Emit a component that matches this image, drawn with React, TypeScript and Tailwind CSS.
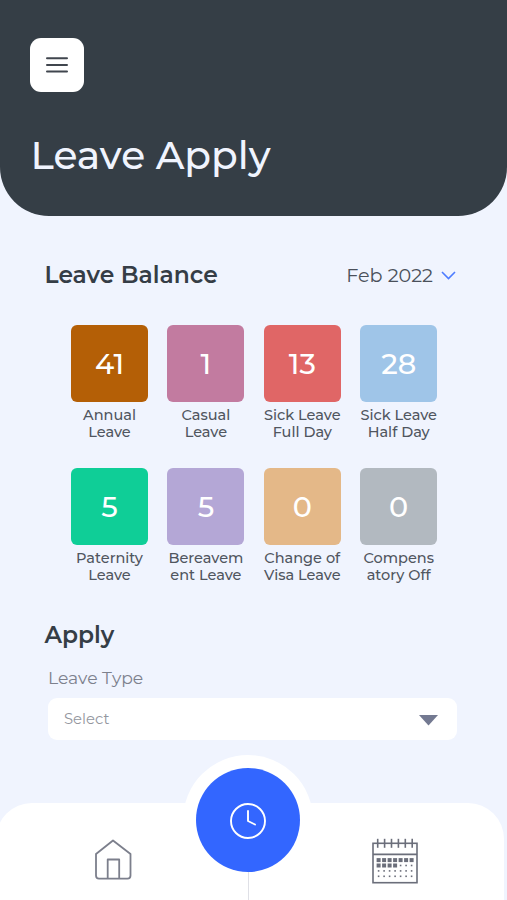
import { useState } from 'react';

const leaveBalances = [
  { count: 41, label: ['Annual', 'Leave'], color: 'bg-[#b45f06]' },
  { count: 1, label: ['Casual', 'Leave'], color: 'bg-[#c27ba0]' },
  { count: 13, label: ['Sick Leave', 'Full Day'], color: 'bg-[#e06666]' },
  { count: 28, label: ['Sick Leave', 'Half Day'], color: 'bg-[#9fc5e8]' },
  { count: 5, label: ['Paternity', 'Leave'], color: 'bg-[#0fce97]' },
  { count: 5, label: ['Bereavem', 'ent Leave'], color: 'bg-[#b4a7d6]' },
  { count: 0, label: ['Change of', 'Visa Leave'], color: 'bg-[#e4b888]' },
  { count: 0, label: ['Compens', 'atory Off'], color: 'bg-[#b2b9c0]' },
];

function HomeIcon() {
  return (
    <svg width="40" height="44" viewBox="0 0 40 44" fill="none" stroke="#7c7f8c" strokeWidth="1.8" strokeLinejoin="round">
      <path d="M3 15 L20 1.500 L37.500 15 V36.500 Q37.500 39.700 34.500 39.700 H6 Q3 39.700 3 36.500 Z" />
      <path d="M14.700 39.700 V20.500 H26.200 V39.700" />
    </svg>
  );
}

function CalendarIcon() {
  const cols = [0, 1, 2, 3, 4, 5, 6];
  const rows = [0, 1, 2, 3];
  const rings = [0, 1, 2, 3, 4, 5];

  return (
    <svg width="48" height="48" viewBox="0 0 48 48" fill="none" stroke="#6b6e7a" strokeWidth="1.6">
      <rect x="2" y="5.300" width="44" height="39.400" />
      <path d="M2 16.400 H46" />
      {rings.map((i) => (
        <path key={i} d={`M${6.7 + i * 6.9} 0.800 V9.800`} />
      ))}
      {rows.map((row) =>
        cols.map((col) => {
          const filled = row === 0 || (row === 1 && col < 4);
          const size = filled ? 4 : 1.6;
          return (
            <rect
              key={`${row}-${col}`}
              x={7.6 + col * 5.5 - size / 2}
              y={22.1 + row * 5.4 - size / 2}
              width={size}
              height={size}
              fill="#6b6e7a"
              stroke="none"
            />
          );
        })
      )}
    </svg>
  );
}

export default function App() {
  const [month] = useState('Feb 2022');
  const [leaveType] = useState('Select');

  return (
    <div className="flex h-[900px] w-[507px] flex-col overflow-hidden bg-[#f0f4fe] font-['Montserrat','Inter',sans-serif] text-[#353d46]">
      {/* Header */}
      <header className="h-[216px] shrink-0 rounded-b-[49px] bg-[#353e46] pl-[30.4px] pt-[38px]">
        <button className="flex size-[54px] items-center justify-center rounded-[11px] bg-white">
          <svg width="22" height="16" viewBox="0 0 22 16" stroke="#40464e" strokeWidth="2" strokeLinecap="round">
            <path d="M1 1.300 H21 M1 8 H21 M1 14.500 H21" />
          </svg>
        </button>
        <h1 className="mt-[39px] text-[39.2px] font-medium leading-[48px] text-[#f0f4fe]">Leave Apply</h1>
      </header>

      {/* Leave balance */}
      <main className="flex-1 pt-[43px]">
        <div className="flex h-8 items-center justify-between pl-[44.5px] pr-[51px]">
          <h2 className="text-[23.4px] font-semibold">Leave Balance</h2>
          <button className="flex items-center gap-2 text-[19.2px] text-[#4a505a]">
            {month}
            <svg className="mt-[2px]" width="15" height="9" viewBox="0 0 15 9" fill="none" stroke="#4d7cff" strokeWidth="1.6">
              <path d="M1 1 L7.500 7.500 L14 1" />
            </svg>
          </button>
        </div>

        <div className="mt-[34px] grid grid-cols-[repeat(4,77px)] gap-x-[19.4px] gap-y-[28px] pl-[71px]">
          {leaveBalances.map((item) => (
            <div key={item.label.join('')} className="flex h-[115.3px] flex-col items-center">
              <div className={`flex size-[77px] shrink-0 items-center justify-center rounded-[6px] text-[28.7px] font-medium text-white ${item.color}`}>
                {item.count}
              </div>
              <p className="mt-[4.5px] whitespace-nowrap text-center text-[14.5px] font-medium leading-[17.5px] text-[#50565f]">
                {item.label[0]}
                <br />
                {item.label[1]}
              </p>
            </div>
          ))}
        </div>

        {/* Apply form */}
        <h2 className="mt-[35px] pl-[44.5px] text-[23.4px] font-semibold leading-8">Apply</h2>
        <div className="pl-[48px] pr-[50px]">
          <label className="mt-[15px] block text-[17.2px] leading-6 text-[#7d818d]">Leave Type</label>
          <button className="mt-[8px] flex h-[42.5px] w-full items-center justify-between rounded-[9px] bg-white pl-4 pr-[19px] text-[14.8px] text-[#93969e]">
            {leaveType}
            <svg className="mt-[3px]" width="19" height="11" viewBox="0 0 19 11" fill="#737991">
              <path d="M0 0 H19 L9.500 10.500 Z" />
            </svg>
          </button>
        </div>
      </main>

      {/* Bottom navigation */}
      <nav className="relative -ml-[4px] mr-[3px] flex h-[97px] shrink-0 justify-between rounded-t-[36px] bg-white pl-[97px] pr-[85px]">
        <div className="pt-[36px]">
          <HomeIcon />
        </div>
        <div className="pt-[35px]">
          <CalendarIcon />
        </div>
        <div className="absolute left-[187px] top-[-48px] flex size-[130px] items-center justify-center rounded-full bg-white">
          <button className="flex size-[104px] items-center justify-center rounded-full bg-[#3366ff]">
            <svg className="mt-px" width="36" height="36" viewBox="0 0 36 36" fill="none" stroke="white" strokeWidth="1.9" strokeLinecap="round" strokeLinejoin="round">
              <circle cx="18" cy="18" r="17" />
              <path d="M18 8 V18 L25 21.500" />
            </svg>
          </button>
        </div>
        <div className="absolute bottom-0 left-[252px] h-[28px] w-px bg-[#dfe0e6]" />
      </nav>
    </div>
  );
}
